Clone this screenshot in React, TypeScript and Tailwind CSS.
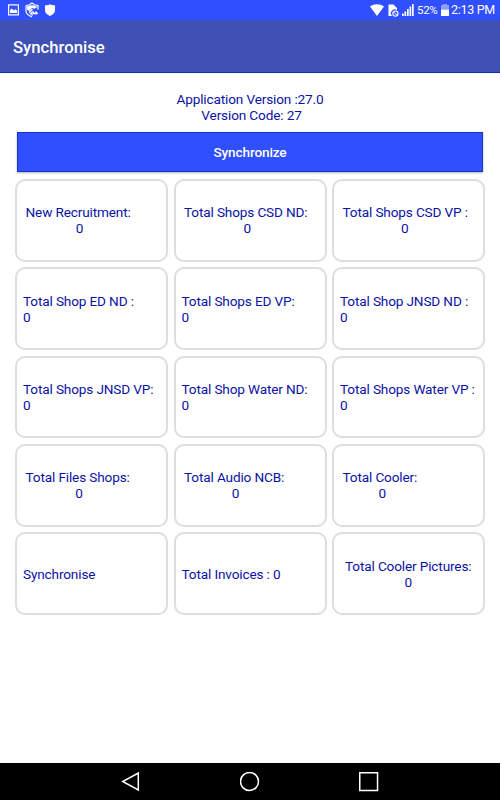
import React from "react";

interface Tile {
  label: string;
  count?: string;
  centered?: boolean;
  inset?: string;
  countInset?: string;
}

const tiles: Tile[] = [
  { label: "New Recruitment:", count: "0", centered: true, inset: "pl-[8.5px]", countInset: "pl-[3px]" },
  { label: "Total Shops CSD ND:", count: "0", centered: true, inset: "pl-[8.5px]", countInset: "pl-[3px]" },
  { label: "Total Shops CSD VP :", count: "0", centered: true, inset: "pl-[8.5px]", countInset: "pr-[1px]" },
  { label: "Total Shop ED ND :", count: "0" },
  { label: "Total Shops ED VP:", count: "0" },
  { label: "Total Shop JNSD ND :", count: "0" },
  { label: "Total Shops JNSD VP:", count: "0" },
  { label: "Total Shop Water ND:", count: "0" },
  { label: "Total Shops Water VP :", count: "0" },
  { label: "Total Files Shops:", count: "0", centered: true, inset: "pl-[8.5px]", countInset: "pl-[3px]" },
  { label: "Total Audio NCB:", count: "0", centered: true, inset: "pl-[8.5px]", countInset: "pl-[3px]" },
  { label: "Total Cooler:", count: "0", centered: true, inset: "pl-[8.5px]", countInset: "pl-[5px]" },
  { label: "Synchronise" },
  { label: "Total Invoices : 0" },
  { label: "Total Cooler Pictures:", count: "0", centered: true, inset: "pl-[11px]" },
];

function StatusBar() {
  return (
    <div className="flex h-5 items-center justify-between bg-[#304ffe] pl-2 pr-[5px] text-white">
      <div className="flex items-center">
        <svg className="h-3 w-[11px]" viewBox="0 0 11 12" fill="none">
          <rect x="0.6" y="0.9" width="9.8" height="10" stroke="#fff" strokeWidth="1.2" />
          <path d="M2 9V6.2l1.8-1.6 1.8 1.7 1.8-1L9 6.6V9z" fill="#fff" />
        </svg>
        <svg className="ml-[6px] h-[16px] w-[14px]" viewBox="0 0 14 16" fill="none" stroke="#fff">
          <path d="M1 3.5 4 3 7 1l3 2 3 .5v4M1 3.5V9c0 3 2.5 4.5 6 6" strokeWidth="1.2" />
          <path d="M2 4.7c3-1.4 6-1.8 10 .2L9.5 6.4 7 5.7 4.3 8.8 2.3 7.7z" fill="#fff" strokeWidth="0.4" />
          <path d="M4 10.5 7.5 7M5 12.3 7 10v3.7" strokeWidth="1.2" />
          <path d="M8 12V9.5l1.5 1.4L11 9.5l1.5 1.4V12z" fill="#fff" strokeWidth="0.6" />
        </svg>
        <svg className="ml-[6px] h-3 w-[10px]" viewBox="0 0 10 12" fill="#fff">
          <path d="M0 1.2C2 1.3 3.7.8 5 .2c1.3.6 3 1.1 5 1v5C10 9 7.6 10.7 5 12 2.4 10.7 0 9 0 6.2z" />
        </svg>
      </div>
      <div className="flex items-center">
        <svg className="h-3 w-[14px]" viewBox="0 0 14 12" fill="#fff">
          <path d="M0 2.4C4-.6 10-.6 14 2.4L7 12z" />
        </svg>
        <svg className="ml-1 h-[13px] w-[11px]" viewBox="0 0 11 13" fill="none">
          <path d="M.5.5h5L9 4v2.300a3.600 3.600 0 0 0-4.700 5.700H.5z" fill="#fff" />
          <circle cx="7.4" cy="9.6" r="2.6" stroke="#fff" strokeWidth="1.1" />
          <path d="m5.7 8 3.4 3.3" stroke="#fff" />
        </svg>
        <svg className="ml-[3px] h-3 w-3" viewBox="0 0 12 12" fill="#fff">
          <path d="M0 9.5h1.7V12H0zM2.5 7.5h1.7V12H2.5zM5 5h1.7v7H5zM7.5 2.5h1.7V12H7.500zM10 0h1.700v12H10z" />
        </svg>
        <span className="ml-[3px] w-[20px] whitespace-nowrap text-[11.5px] leading-5 tracking-[-0.3px]">52%</span>
        <svg className="ml-[4px] h-3 w-2" viewBox="0 0 8 12" fill="#fff">
          <path d="M2 0h4v1h2v4.5H0V1h2z" opacity=".45" />
          <path d="M0 5.5h8V12H0z" />
        </svg>
        <span className="ml-[2px] w-[44px] whitespace-nowrap text-[12.5px] leading-5 tracking-[-0.3px]">2:13 PM</span>
      </div>
    </div>
  );
}

function TileCard({ label, count, centered, inset = "pl-[6px]", countInset = "" }: Tile) {
  return (
    <div className={`flex items-center rounded-[10px] border-2 border-[#dedede] ${inset}`}>
      <div className={`whitespace-nowrap ${centered ? "text-center" : ""}`}>
        <div>{label}</div>
        {count && <div className={countInset}>{count}</div>}
      </div>
    </div>
  );
}

export default function App() {
  return (
    <div className="flex h-[800px] w-[500px] flex-col bg-white font-['Roboto',sans-serif] text-[13.6px] leading-[16px] tracking-[-0.14px] text-[#0b12a5]">
      <StatusBar />
      <header className="flex h-[53px] items-center border-b border-[#0d2fb5] bg-[#3f51b5] pl-[13px] pt-[3px] text-[16.7px] font-medium tracking-normal text-white">
        Synchronise
      </header>
      <main className="flex flex-1 flex-col px-[15px] pt-[18px]">
        <div className="text-center">
          <p>Application Version :27.0</p>
          <p className="pl-[3px]">Version Code: 27</p>
        </div>
        <button className="mx-[2px] mt-[9px] h-[40px] border border-[#1735c4] bg-[#304ffe] text-[13.6px] font-medium text-white shadow-[0_1px_2px_rgba(0,0,0,0.3)]">
          Synchronize
        </button>
        <div className="mt-[7px] grid h-[436px] grid-cols-3 grid-rows-5 gap-x-[5.5px] gap-y-[5.5px]">
          {tiles.map((tile) => (
            <TileCard key={tile.label} {...tile} />
          ))}
        </div>
      </main>
      <nav className="flex h-[37px] items-center justify-between bg-black pl-[121px] pr-[121px]">
        <svg className="h-5 w-[19px]" viewBox="0 0 19 20" fill="none" stroke="#fff" strokeWidth="1.5">
          <path d="M17.3 1v17L1.7 9.5z" />
        </svg>
        <svg className="h-5 w-5" viewBox="0 0 20 20" fill="none" stroke="#fff" strokeWidth="1.5">
          <circle cx="9.5" cy="9.5" r="9" />
        </svg>
        <svg className="h-5 w-5" viewBox="0 0 20 20" fill="none" stroke="#fff" strokeWidth="1.5">
          <path d="M.75.75h17.8v17.8H.75z" />
        </svg>
      </nav>
    </div>
  );
}
